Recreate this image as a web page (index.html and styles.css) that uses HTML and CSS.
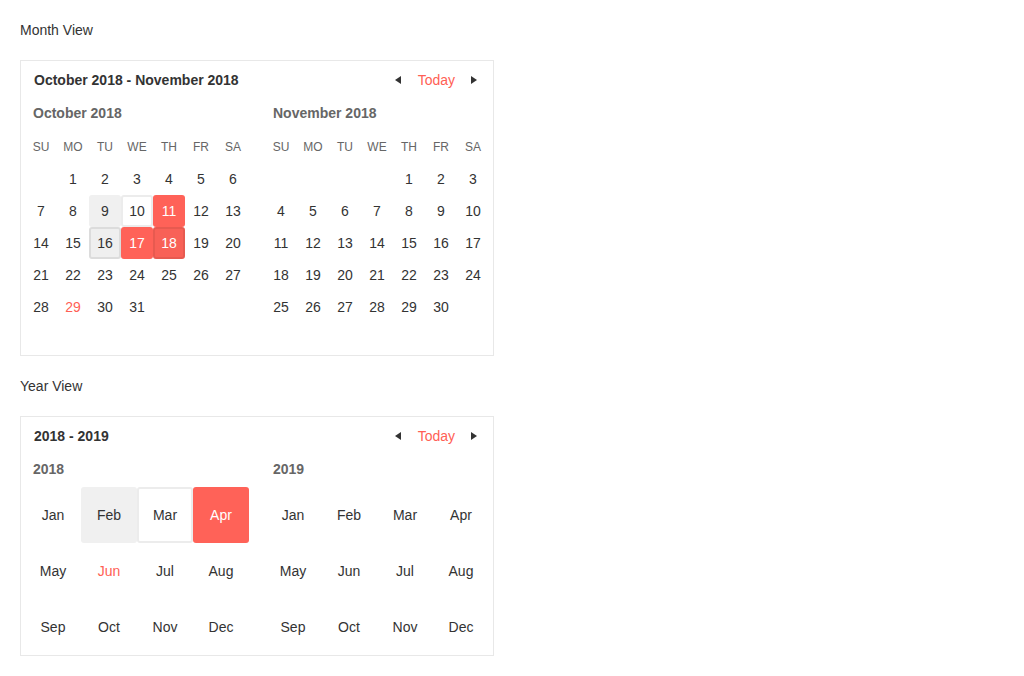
FILE: index.html
```html
<!DOCTYPE html>
<html>
<head>
<meta charset="utf-8">
<link rel="stylesheet" href="styles.css">
</head>
<body>
<div class="label">Month View</div>
<div class="card">
  <div class="head">
    <div class="head-title">October 2018 - November 2018</div>
    <div class="nav">
      <span class="arrow left"></span>
      <span class="today">Today</span>
      <span class="arrow right"></span>
    </div>
  </div>
  <div class="panels">
    <div class="panel">
      <div class="ptitle">October 2018</div>
      <div class="days">
        <span class="wd">SU</span><span class="wd">MO</span><span class="wd">TU</span><span class="wd">WE</span><span class="wd">TH</span><span class="wd">FR</span><span class="wd">SA</span>
        <span class="d"></span><span class="d">1</span><span class="d">2</span><span class="d">3</span><span class="d">4</span><span class="d">5</span><span class="d">6</span>
        <span class="d">7</span><span class="d">8</span><span class="d hover">9</span><span class="d outline">10</span><span class="d sel">11</span><span class="d">12</span><span class="d">13</span>
        <span class="d">14</span><span class="d">15</span><span class="d hover-border">16</span><span class="d sel">17</span><span class="d sel-border">18</span><span class="d">19</span><span class="d">20</span>
        <span class="d">21</span><span class="d">22</span><span class="d">23</span><span class="d">24</span><span class="d">25</span><span class="d">26</span><span class="d">27</span>
        <span class="d">28</span><span class="d red">29</span><span class="d">30</span><span class="d">31</span><span class="d"></span><span class="d"></span><span class="d"></span>
        <span class="d"></span><span class="d"></span><span class="d"></span><span class="d"></span><span class="d"></span><span class="d"></span><span class="d"></span>
      </div>
    </div>
    <div class="panel">
      <div class="ptitle">November 2018</div>
      <div class="days">
        <span class="wd">SU</span><span class="wd">MO</span><span class="wd">TU</span><span class="wd">WE</span><span class="wd">TH</span><span class="wd">FR</span><span class="wd">SA</span>
        <span class="d"></span><span class="d"></span><span class="d"></span><span class="d"></span><span class="d">1</span><span class="d">2</span><span class="d">3</span>
        <span class="d">4</span><span class="d">5</span><span class="d">6</span><span class="d">7</span><span class="d">8</span><span class="d">9</span><span class="d">10</span>
        <span class="d">11</span><span class="d">12</span><span class="d">13</span><span class="d">14</span><span class="d">15</span><span class="d">16</span><span class="d">17</span>
        <span class="d">18</span><span class="d">19</span><span class="d">20</span><span class="d">21</span><span class="d">22</span><span class="d">23</span><span class="d">24</span>
        <span class="d">25</span><span class="d">26</span><span class="d">27</span><span class="d">28</span><span class="d">29</span><span class="d">30</span><span class="d"></span>
        <span class="d"></span><span class="d"></span><span class="d"></span><span class="d"></span><span class="d"></span><span class="d"></span><span class="d"></span>
      </div>
    </div>
  </div>
</div>

<div class="label second">Year View</div>
<div class="card">
  <div class="head">
    <div class="head-title">2018 - 2019</div>
    <div class="nav">
      <span class="arrow left"></span>
      <span class="today">Today</span>
      <span class="arrow right"></span>
    </div>
  </div>
  <div class="panels">
    <div class="panel">
      <div class="ptitle">2018</div>
      <div class="months">
        <span class="m">Jan</span><span class="m hover">Feb</span><span class="m outline">Mar</span><span class="m sel">Apr</span>
        <span class="m">May</span><span class="m red">Jun</span><span class="m">Jul</span><span class="m">Aug</span>
        <span class="m">Sep</span><span class="m">Oct</span><span class="m">Nov</span><span class="m">Dec</span>
      </div>
    </div>
    <div class="panel">
      <div class="ptitle">2019</div>
      <div class="months">
        <span class="m">Jan</span><span class="m">Feb</span><span class="m">Mar</span><span class="m">Apr</span>
        <span class="m">May</span><span class="m">Jun</span><span class="m">Jul</span><span class="m">Aug</span>
        <span class="m">Sep</span><span class="m">Oct</span><span class="m">Nov</span><span class="m">Dec</span>
      </div>
    </div>
  </div>
</div>
</body>
</html>
```

FILE: styles.css
```css
* { box-sizing: border-box; }
body {
  margin: 0;
  padding: 20px;
  font-family: "Liberation Sans", Arial, sans-serif;
  font-size: 14px;
  color: #333;
  background: #fff;
}
.label {
  line-height: 20px;
  height: 20px;
  margin-bottom: 20px;
  color: #333;
}
.label.second { margin-top: 20px; }
.card {
  width: 474px;
  border: 1px solid #e8e8e8;
  background: #fff;
}
.head {
  height: 38px;
  display: flex;
  align-items: center;
  justify-content: space-between;
  padding: 0 16px 0 13px;
}
.head-title {
  font-weight: bold;
  color: #333;
}
.nav {
  display: flex;
  align-items: center;
}
.arrow {
  width: 0;
  height: 0;
  border-top: 4px solid transparent;
  border-bottom: 4px solid transparent;
}
.arrow.left { border-right: 6px solid #333; }
.arrow.right { border-left: 6px solid #333; }
.today {
  color: #ff5f55;
  margin: 0 16px 0 17px;
}
.panels {
  display: flex;
  gap: 16px;
  padding: 0 4px;
}
.panel { width: 224px; }
.ptitle {
  margin-top: 4px;
  height: 20px;
  line-height: 20px;
  padding-left: 8px;
  font-weight: bold;
  color: #666;
  margin-bottom: 8px;
}
.days {
  display: grid;
  grid-template-columns: repeat(7, 32px);
  grid-auto-rows: 32px;
}
.wd, .d {
  display: flex;
  align-items: center;
  justify-content: center;
}
.wd { font-size: 12px; color: #666; }
.d { border-radius: 3px; color: #333; }
.months {
  display: grid;
  grid-template-columns: repeat(4, 56px);
  grid-auto-rows: 56px;
}
.m {
  display: flex;
  align-items: center;
  justify-content: center;
  border-radius: 3px;
  color: #333;
}
.hover { background: #f0f0f0; }
.outline { border: 2px solid #ececec; background: #fff; }
.hover-border { background: #efefef; border: 2px solid #dcdcdc; }
.sel { background: #ff6258; color: #fff; }
.sel-border { background: #f86157; border: 2px solid #e75a50; color: #fff; }
.red { color: #ff5f55; }
```
